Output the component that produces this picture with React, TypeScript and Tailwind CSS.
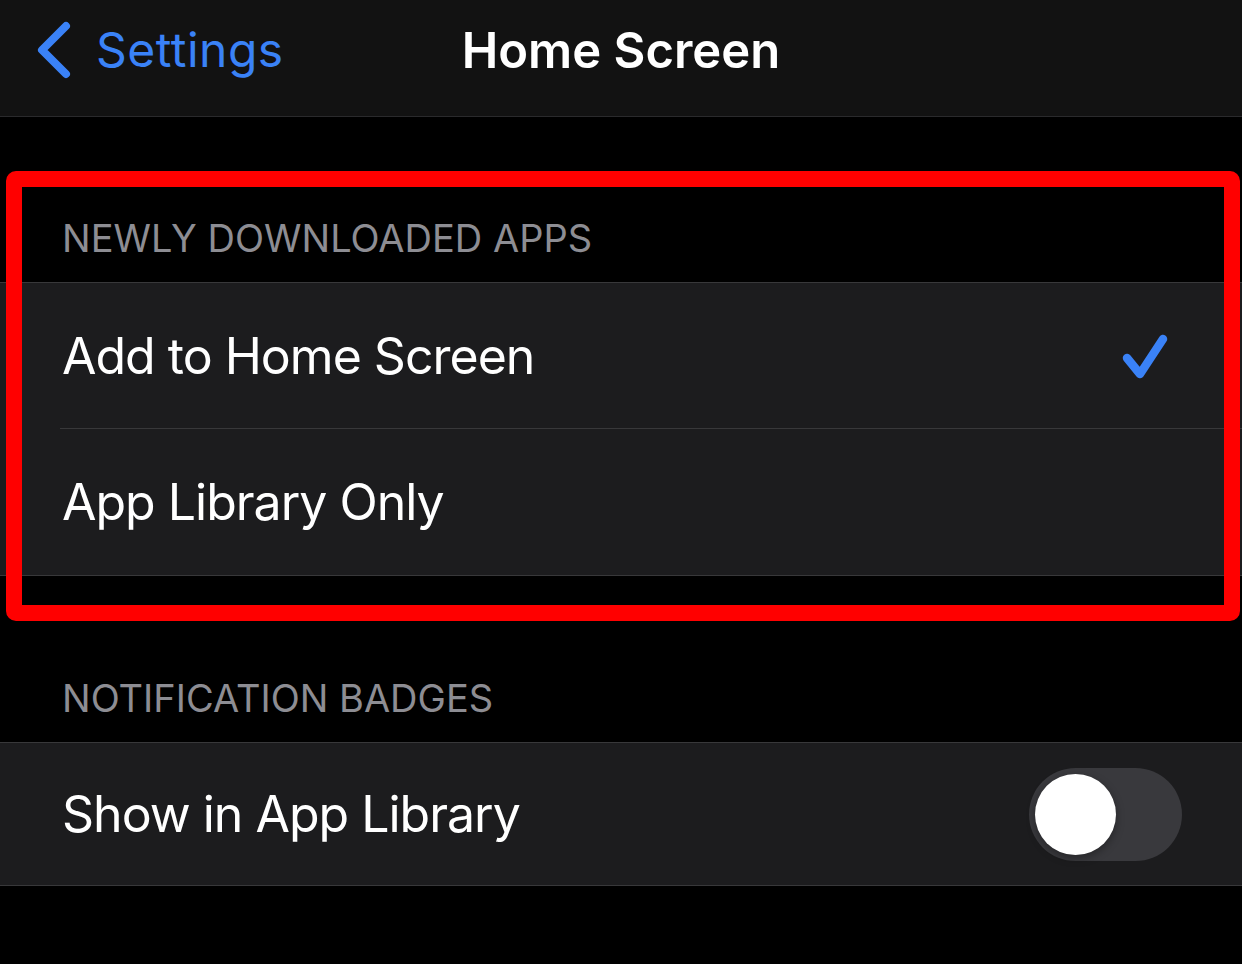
const font = { fontFamily: 'Inter, "Noto Sans", sans-serif' };

function SectionHeader({ label, className }: { label: string; className: string }) {
  return (
    <div className={`px-[62px] flex items-end ${className}`}>
      <span className="text-[38px] leading-none text-[#8d8d93]">{label}</span>
    </div>
  );
}

function BackChevron() {
  return (
    <svg width="40" height="60" viewBox="0 0 40 60" fill="none" className="shrink-0">
      <path d="M32 6 L8 30 L32 54" stroke="currentColor" strokeWidth="8" strokeLinecap="round" strokeLinejoin="round" />
    </svg>
  );
}

function Tick() {
  return (
    <svg width="50" height="50" viewBox="0 0 50 50" fill="none" className="shrink-0">
      <path d="M7 27 L20 43 L43 8" stroke="#3a82f7" strokeWidth="8.5" strokeLinecap="round" strokeLinejoin="round" />
    </svg>
  );
}

export default function App() {
  return (
    <div className="relative w-full h-[964px] bg-black overflow-hidden text-white" style={font}>
      {/* Nav bar */}
      <div className="h-[117px] pb-[16px] bg-[#121212] border-b border-[#2a2a2c] grid grid-cols-[1fr_auto_1fr] items-center">
        <div className="flex items-center pl-[34px] text-[#3a82f7]">
          <BackChevron />
          <span className="ml-[22px] text-[48px] leading-none tracking-[0.01em]">Settings</span>
        </div>
        <h1 className="text-[49px] font-semibold leading-none">Home Screen</h1>
        <div />
      </div>

      {/* Newly downloaded apps */}
      <SectionHeader label="NEWLY DOWNLOADED APPS" className="h-[165px] pb-[25px]" />
      <div className="bg-[#1c1c1e] border-y border-[#38383a]">
        <div className="h-[145px] flex items-center pl-[62px] pr-[72px]">
          <span className="flex-1 text-[50px] leading-none tracking-[-0.02em]">Add to Home Screen</span>
          <Tick />
        </div>
        <div className="ml-[60px] h-px bg-[#38383a]" />
        <div className="h-[146px] flex items-center pl-[62px]">
          <span className="text-[50px] leading-none tracking-[-0.02em]">App Library Only</span>
        </div>
      </div>

      {/* Notification badges */}
      <SectionHeader label="NOTIFICATION BADGES" className="h-[166px] pb-[25px]" />
      <div className="bg-[#1c1c1e] border-y border-[#38383a]">
        <div className="h-[142px] flex items-center pl-[62px] pr-[60px]">
          <span className="flex-1 text-[50px] leading-none tracking-[-0.02em]">Show in App Library</span>
          <div className="w-[153px] h-[93px] rounded-full bg-[#39393d] p-[6px] flex items-center">
            <div className="w-[81px] h-[81px] rounded-full bg-white shadow-[0_3px_8px_rgba(0,0,0,0.35)]" />
          </div>
        </div>
      </div>

      {/* Annotation */}
      <div className="absolute left-[6px] top-[171px] w-[1234px] h-[450px] border-[16px] border-[#ff0000] rounded-[10px] pointer-events-none" />
    </div>
  );
}
